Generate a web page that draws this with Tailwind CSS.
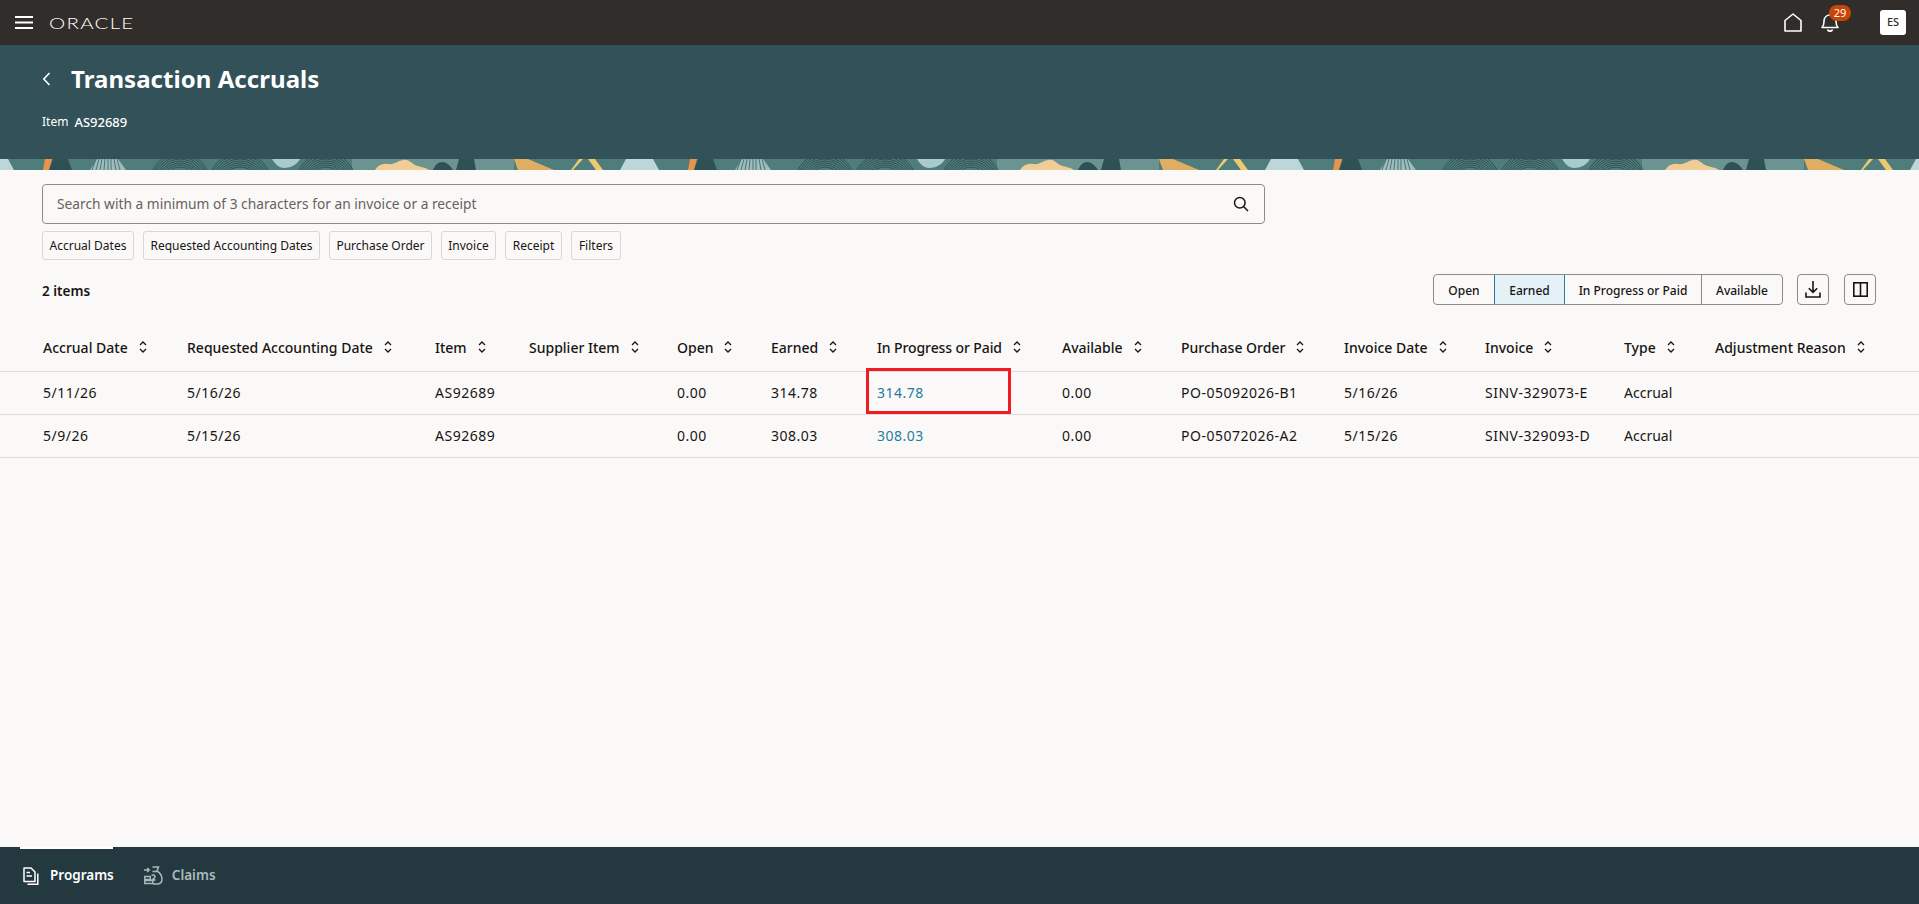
<!DOCTYPE html>
<html lang="en">
<head>
    <meta charset="UTF-8">
    <meta name="viewport" content="width=device-width, initial-scale=1.0">
    <title>Transaction Accruals</title>
    <script src="https://cdn.jsdelivr.net/npm/@tailwindcss/browser@4"></script>
</head>
<body class="bg-[#fbf9f8] font-['Noto_Sans',sans-serif] text-[#161513] h-[904px] overflow-hidden flex flex-col">

<!-- Top bar -->
<div class="h-[45px] bg-[#312d2a] flex items-center shrink-0 pl-[15px] pr-[13px]">
    <svg class="w-[18px] h-[13px] text-white" viewBox="0 0 18 13" fill="currentColor"><rect width="18" height="2"/><rect y="5.5" width="18" height="2"/><rect y="11" width="18" height="2"/></svg>
    <span class="ml-[16px] font-['Lato',sans-serif] font-light text-[16px] leading-none text-white tracking-[1px] scale-x-[1.28] origin-left">ORACLE</span>
    <div class="ml-auto flex items-center">
        <svg class="w-[18px] h-[19px] text-white" viewBox="0 0 18 19" fill="none" stroke="currentColor" stroke-width="1.6"><path d="M1 7.500 9 1l8 6.500V18H1z" stroke-linejoin="round"/></svg>
        <div class="relative ml-[19px] mr-[41px]">
            <svg class="w-[18px] h-[19px] text-white" viewBox="0 0 18 19" fill="none" stroke="currentColor" stroke-width="1.6"><path d="M1 14.5c1.500-1.500 2-3 2-6C3 4.500 5.500 2 9 2s6 2.500 6 6.500c0 3 .5 4.500 2 6z" stroke-linejoin="round"/><path d="M6.500 16.500c.5 1.200 1.400 1.700 2.500 1.700s2-.5 2.500-1.700" stroke-width="1.800"/></svg>
            <span class="absolute left-[8px] top-[-8px] w-[22px] h-[16px] rounded-full bg-[#c74606] text-white text-[11px] leading-[16px] text-center">29</span>
        </div>
        <div class="w-[26px] h-[25px] bg-white rounded-[3px] text-[#312d2a] text-[11px] font-medium flex items-center justify-center">ES</div>
    </div>
</div>

<!-- Page header -->
<div class="h-[114px] bg-[#325158] shrink-0 pl-[42px] text-white">
    <div class="flex items-center h-[28px] mt-[20px]">
        <svg class="w-[9px] h-[14px]" viewBox="0 0 9 14" fill="none" stroke="currentColor" stroke-width="1.600"><path d="M7.500 1 1.800 7l5.700 6"/></svg>
        <h1 class="ml-[20px] text-[24px] leading-[28px] font-bold tracking-[0.05px]">Transaction Accruals</h1>
    </div>
    <div class="mt-[20px] text-[12px] leading-[18px] flex items-center gap-[6px]"><span>Item</span><span class="font-medium text-[13px]">AS92689</span></div>
</div>

<!-- Decorative strip -->
<svg class="w-full h-[11px] shrink-0 block" xmlns="http://www.w3.org/2000/svg">
    <defs>
        <pattern id="strip" x="0" y="0" width="645" height="11" patternUnits="userSpaceOnUse">
            <rect width="645" height="11" fill="#4f7d7b"/>
            <rect x="352" width="162" height="11" fill="#6b9490"/>
            <path d="M0 0h8l6 11H0z" fill="#bdd6d8"/>
            <path d="M620 11l6-11h22l10 11z" fill="#bdd6d8"/>
            <path d="M45 0h7l-3 11h-6z" fill="#e8944a"/>
            <path d="M53 0h15l4 11H49z" fill="#2f5055"/>
            <path d="M97 0h21l8 11H90z" fill="#9dbcbb"/>
            <path d="M96 0l-4 11M99 0l-3 11M102 0l-2 11M105 0l-1 11M108 0v11M111 0v11M114 0l2 11M117 0l3 11" stroke="#4a7573" stroke-width="1"/>
            <path d="M272 0h28c-3 6-10 9-16 9-5 0-9-4-12-9z" fill="#a9cbcd"/>
            <g fill="none" stroke="#2b4a4e" stroke-width="0.9">
                <circle cx="180" cy="24" r="30"/><circle cx="180" cy="24" r="28"/><circle cx="180" cy="24" r="26"/><circle cx="180" cy="24" r="24"/><circle cx="180" cy="24" r="22"/><circle cx="180" cy="24" r="20"/><circle cx="180" cy="24" r="18"/><circle cx="180" cy="24" r="16"/>
                <circle cx="240" cy="26" r="32"/><circle cx="240" cy="26" r="30"/><circle cx="240" cy="26" r="28"/><circle cx="240" cy="26" r="26"/><circle cx="240" cy="26" r="24"/><circle cx="240" cy="26" r="22"/><circle cx="240" cy="26" r="20"/><circle cx="240" cy="26" r="18"/>
                <circle cx="326" cy="24" r="30"/><circle cx="326" cy="24" r="28"/><circle cx="326" cy="24" r="26"/><circle cx="326" cy="24" r="24"/><circle cx="326" cy="24" r="22"/><circle cx="326" cy="24" r="20"/><circle cx="326" cy="24" r="18"/><circle cx="326" cy="24" r="16"/>
            </g>
            <path d="M375 11c3-5 8-7 13-6 6 1 9-3 15-4 6-1 8 3 12 5 5 2 10 2 14 5z" fill="#f0cd96"/>
            <path d="M433 11c2-5 5-8 9-8s8 3 11 8z" fill="#2f5055"/>
            <path d="M459 0h15l2 11h-20z" fill="#2f5055"/>
            <path d="M514 0h14l26 11h-36z" fill="#e0ae63"/>
            <path d="M579 0h4l-10 11h-2z" fill="#f0c86e"/>
            <path d="M588 0h7l8 11h-7z" fill="#f0c86e"/>
        </pattern>
    </defs>
    <rect width="100%" height="11" fill="url(#strip)"/>
</svg>

<!-- Content -->
<div class="flex-1 min-h-0">
    <div class="pl-[42px] pr-[43px]">
        <div class="w-[1223px] h-[40px] mt-[14px] border border-[#8d8a87] rounded-[4px] flex items-center pl-[14px] pr-[15px] text-[13.75px] text-[#65615d]">
            <span>Search with a minimum of 3 characters for an invoice or a receipt</span>
            <svg class="ml-auto w-[16px] h-[16px] text-[#161513]" viewBox="0 0 16 16" fill="none" stroke="currentColor" stroke-width="1.500"><circle cx="6.800" cy="6.800" r="5.300"/><path d="m10.800 10.800 4.200 4.200"/></svg>
        </div>
        <div class="flex gap-[9px] mt-[7px] text-[12px]">
            <button class="h-[29px] w-[92px] border border-[#d9d6d3] rounded-[3px]">Accrual Dates</button>
            <button class="h-[29px] w-[177px] border border-[#d9d6d3] rounded-[3px]">Requested Accounting Dates</button>
            <button class="h-[29px] w-[103px] border border-[#d9d6d3] rounded-[3px]">Purchase Order</button>
            <button class="h-[29px] w-[55px] border border-[#d9d6d3] rounded-[3px]">Invoice</button>
            <button class="h-[29px] w-[57px] border border-[#d9d6d3] rounded-[3px]">Receipt</button>
            <button class="h-[29px] w-[50px] border border-[#d9d6d3] rounded-[3px]">Filters</button>
        </div>
        <div class="flex items-center justify-between mt-[14px] h-[31px]">
            <span class="text-[13.5px] font-semibold pt-[3px]">2 items</span>
            <div class="flex items-center">
                <div class="flex h-[31px] text-[12px] font-medium border border-[#8d8a87] rounded-[4px] overflow-hidden mr-[14px]">
                    <div class="w-[60px] flex items-center justify-center pt-[2px]">Open</div>
                    <div class="w-[71px] flex items-center justify-center pt-[2px] bg-[#e4f1f7] border border-[#227e9e] -my-px">Earned</div>
                    <div class="w-[137px] flex items-center justify-center pt-[2px] border-r border-[#8d8a87]">In Progress or Paid</div>
                    <div class="w-[80px] flex items-center justify-center pt-[2px]">Available</div>
                </div>
                <button class="w-[32px] h-[31px] border border-[#8d8a87] rounded-[4px] flex items-center justify-center">
                    <svg class="w-[16px] h-[17px]" viewBox="0 0 16 17" fill="none" stroke="currentColor" stroke-width="1.600"><path d="M8 0v11M3.800 7.200 8 11.400l4.200-4.200"/><path d="M1 11.500V16h14v-4.500"/></svg>
                </button>
                <button class="w-[32px] h-[31px] ml-[15px] border border-[#8d8a87] rounded-[4px] flex items-center justify-center">
                    <svg class="w-[15px] h-[15px]" viewBox="0 0 15 15" fill="none" stroke="currentColor" stroke-width="1.600"><rect x="0.800" y="0.800" width="13.400" height="13.400"/><path d="M7.500 0v15"/></svg>
                </button>
            </div>
        </div>
    </div>

    <!-- Table -->
    <table class="mt-[20px] w-[1919px] table-fixed border-collapse text-[14px]">
        <colgroup>
            <col class="w-[187px]"><col class="w-[248px]"><col class="w-[94px]"><col class="w-[148px]"><col class="w-[94px]"><col class="w-[106px]"><col class="w-[185px]"><col class="w-[119px]"><col class="w-[163px]"><col class="w-[141px]"><col class="w-[139px]"><col class="w-[91px]"><col class="w-[204px]">
        </colgroup>
        <thead>
            <tr class="h-[46px] border-b border-[#dfdcd9] text-left font-medium">
                <th class="pl-[43px] font-medium pb-[1px]"><span class="inline-flex items-center gap-[11px]">Accrual Date<svg class="w-[8px] h-[12px]" viewBox="0 0 8 12" fill="none" stroke="currentColor" stroke-width="1.300"><path d="M1 4 4 1l3 3M1 8l3 3 3-3"/></svg></span></th>
                <th class="font-medium pb-[1px]"><span class="inline-flex items-center gap-[11px]">Requested Accounting Date<svg class="w-[8px] h-[12px]" viewBox="0 0 8 12" fill="none" stroke="currentColor" stroke-width="1.300"><path d="M1 4 4 1l3 3M1 8l3 3 3-3"/></svg></span></th>
                <th class="font-medium pb-[1px]"><span class="inline-flex items-center gap-[11px]">Item<svg class="w-[8px] h-[12px]" viewBox="0 0 8 12" fill="none" stroke="currentColor" stroke-width="1.300"><path d="M1 4 4 1l3 3M1 8l3 3 3-3"/></svg></span></th>
                <th class="font-medium pb-[1px]"><span class="inline-flex items-center gap-[11px]">Supplier Item<svg class="w-[8px] h-[12px]" viewBox="0 0 8 12" fill="none" stroke="currentColor" stroke-width="1.300"><path d="M1 4 4 1l3 3M1 8l3 3 3-3"/></svg></span></th>
                <th class="font-medium pb-[1px]"><span class="inline-flex items-center gap-[11px]">Open<svg class="w-[8px] h-[12px]" viewBox="0 0 8 12" fill="none" stroke="currentColor" stroke-width="1.300"><path d="M1 4 4 1l3 3M1 8l3 3 3-3"/></svg></span></th>
                <th class="font-medium pb-[1px]"><span class="inline-flex items-center gap-[11px]">Earned<svg class="w-[8px] h-[12px]" viewBox="0 0 8 12" fill="none" stroke="currentColor" stroke-width="1.300"><path d="M1 4 4 1l3 3M1 8l3 3 3-3"/></svg></span></th>
                <th class="font-medium pb-[1px]"><span class="inline-flex items-center gap-[11px] tracking-[-0.1px]">In Progress or Paid<svg class="w-[8px] h-[12px]" viewBox="0 0 8 12" fill="none" stroke="currentColor" stroke-width="1.300"><path d="M1 4 4 1l3 3M1 8l3 3 3-3"/></svg></span></th>
                <th class="font-medium pb-[1px]"><span class="inline-flex items-center gap-[11px]">Available<svg class="w-[8px] h-[12px]" viewBox="0 0 8 12" fill="none" stroke="currentColor" stroke-width="1.300"><path d="M1 4 4 1l3 3M1 8l3 3 3-3"/></svg></span></th>
                <th class="font-medium pb-[1px]"><span class="inline-flex items-center gap-[11px]">Purchase Order<svg class="w-[8px] h-[12px]" viewBox="0 0 8 12" fill="none" stroke="currentColor" stroke-width="1.300"><path d="M1 4 4 1l3 3M1 8l3 3 3-3"/></svg></span></th>
                <th class="font-medium pb-[1px]"><span class="inline-flex items-center gap-[11px]">Invoice Date<svg class="w-[8px] h-[12px]" viewBox="0 0 8 12" fill="none" stroke="currentColor" stroke-width="1.300"><path d="M1 4 4 1l3 3M1 8l3 3 3-3"/></svg></span></th>
                <th class="font-medium pb-[1px]"><span class="inline-flex items-center gap-[11px]">Invoice<svg class="w-[8px] h-[12px]" viewBox="0 0 8 12" fill="none" stroke="currentColor" stroke-width="1.300"><path d="M1 4 4 1l3 3M1 8l3 3 3-3"/></svg></span></th>
                <th class="font-medium pb-[1px]"><span class="inline-flex items-center gap-[11px]">Type<svg class="w-[8px] h-[12px]" viewBox="0 0 8 12" fill="none" stroke="currentColor" stroke-width="1.300"><path d="M1 4 4 1l3 3M1 8l3 3 3-3"/></svg></span></th>
                <th class="font-medium pb-[1px]"><span class="inline-flex items-center gap-[11px]">Adjustment Reason<svg class="w-[8px] h-[12px]" viewBox="0 0 8 12" fill="none" stroke="currentColor" stroke-width="1.300"><path d="M1 4 4 1l3 3M1 8l3 3 3-3"/></svg></span></th>
            </tr>
        </thead>
        <tbody class="tracking-[0.5px]">
            <tr class="h-[43px] border-b border-[#dfdcd9]">
                <td class="pl-[43px]">5/11/26</td><td>5/16/26</td><td>AS92689</td><td></td><td>0.00</td><td>314.78</td>
                <td class="relative"><a class="text-[#227e9e]">314.78</a><div class="absolute left-[-11px] top-[-4px] w-[145px] h-[46px] border-[3px] border-[#ee1c25]"></div></td>
                <td>0.00</td><td>PO-05092026-B1</td><td>5/16/26</td><td>SINV-329073-E</td><td class="tracking-normal">Accrual</td><td></td>
            </tr>
            <tr class="h-[43px] border-b border-[#dfdcd9]">
                <td class="pl-[43px]">5/9/26</td><td>5/15/26</td><td>AS92689</td><td></td><td>0.00</td><td>308.03</td>
                <td><a class="text-[#227e9e]">308.03</a></td>
                <td>0.00</td><td>PO-05072026-A2</td><td>5/15/26</td><td>SINV-329093-D</td><td class="tracking-normal">Accrual</td><td></td>
            </tr>
        </tbody>
    </table>
</div>

<!-- Bottom tabs -->
<div class="h-[57px] bg-[#24393f] shrink-0 flex items-center pl-[20px] relative text-[13.5px] font-semibold">
    <div class="absolute left-[20px] top-0 w-[93px] h-[2px] bg-white"></div>
    <div class="flex items-center gap-[10px] text-white pl-[3px]">
        <svg class="w-[17px] h-[18px]" viewBox="0 0 17 18" fill="none" stroke="currentColor" stroke-width="1.500"><path d="M1 1h7l4 4v9.500H1z" stroke-linejoin="round"/><path d="M14.800 6.500v10.700H4.500"/><path d="M3.500 5.500h3.500M3.500 9h5.500" /></svg>
        <span>Programs</span>
    </div>
    <div class="flex items-center gap-[9px] text-[#aab9bc] ml-[30px]">
        <svg class="w-[19px] h-[19px]" viewBox="0 0 19 19" fill="none" stroke="currentColor" stroke-width="1.500"><path d="M0 4h5M3.200 2l2 2-2 2"/><path d="M8.500 1h6l-1.500 4c2.800 1.800 5 4.800 5 8 0 3-2 5-5 5H9"/><path d="M8.500 5.500H13"/><path d="M7.500 9.500c1.500-1 3.500-.6 3.500 1s-1.500 2-3 3.500h3.500"/><rect x="0.800" y="10.500" width="5.500" height="3"/><rect x="0.800" y="14.500" width="8" height="3"/></svg>
        <span>Claims</span>
    </div>
</div>

</body>
</html>
